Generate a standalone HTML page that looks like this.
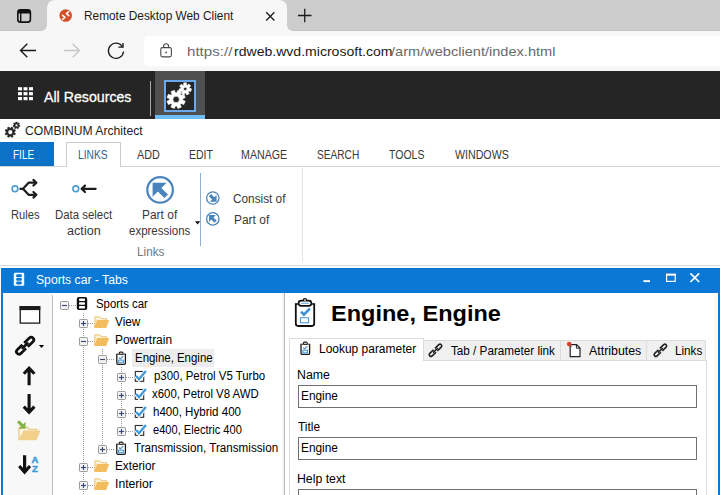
<!DOCTYPE html>
<html>
<head>
<meta charset="utf-8">
<title>Remote Desktop Web Client</title>
<style>
html,body{margin:0;padding:0;}
body{width:720px;height:495px;overflow:hidden;position:relative;background:#fff;font-family:"Liberation Sans",sans-serif;}
.a{position:absolute;}
.t{position:absolute;white-space:nowrap;line-height:1;transform-origin:0 50%;}
svg{position:absolute;left:0;top:0;}

</style>
</head>
<body>
<!-- browser chrome -->
<div class="a" style="left:0;top:0;width:720px;height:31px;background:#cdcdcd;"></div>
<div class="a" style="left:0;top:31px;width:720px;height:40px;background:#f7f7f7;"></div>
<div class="a" style="left:0;top:30.4px;width:720px;height:1px;background:#c3c3c3;"></div>
<div class="a" style="left:47px;top:0;width:240px;height:32px;background:#f7f7f7;border-radius:8px 8px 0 0;"></div>
<div class="a" style="left:41px;top:25px;width:6px;height:6px;background:#f7f7f7;"></div>
<div class="a" style="left:41px;top:25px;width:6px;height:6px;background:#cdcdcd;border-radius:0 0 6px 0;"></div>
<div class="a" style="left:287px;top:25px;width:6px;height:6px;background:#f7f7f7;"></div>
<div class="a" style="left:287px;top:25px;width:6px;height:6px;background:#cdcdcd;border-radius:0 0 0 6px;"></div>
<div class="a" style="left:144px;top:36px;width:600px;height:30px;background:#fff;border-radius:5px;"></div>
<!-- remote desktop app bar -->
<div class="a" style="left:0;top:71px;width:720px;height:48px;background:#252525;"></div>
<div class="a" style="left:155px;top:71px;width:50px;height:44px;background:#505050;"></div>
<div class="a" style="left:155px;top:115px;width:50px;height:4px;background:#6ebdf7;"></div>
<div class="a" style="left:164px;top:80px;width:28px;height:28px;border:2px solid #6aa9ee;background:#252525;"></div>
<div class="a" style="left:150px;top:81px;width:1px;height:35px;background:#a8a8a8;"></div>
<!-- ribbon -->
<div class="a" style="left:0;top:142.4px;width:54px;height:23.6px;background:#0c72c6;"></div>
<div class="a" style="left:0;top:166px;width:720px;height:1px;background:#d2d2d2;"></div>
<div class="a" style="left:66px;top:142px;width:53px;height:24px;border:1px solid #cccccc;border-bottom:none;background:#fff;"></div>
<div class="a" style="left:0;top:265px;width:720px;height:1px;background:#d6d6d6;"></div>
<div class="a" style="left:302px;top:168px;width:1px;height:94px;background:#e4e4e4;"></div>
<div class="a" style="left:200px;top:173px;width:1px;height:73px;background:#8fb0d0;"></div>
<!-- child window -->
<div class="a" style="left:1px;top:268px;width:719px;height:227px;background:#0a78d4;"></div>
<div class="a" style="left:2.6px;top:292.5px;width:715.6px;height:203px;background:#fff;"></div>
<div class="a" style="left:2.6px;top:292.5px;width:49.4px;height:203px;background:#f8f8f8;"></div>
<div class="a" style="left:52px;top:295px;width:1px;height:200px;background:#bdbdbd;"></div>
<div class="a" style="left:282px;top:292.5px;width:2px;height:203px;background:#f6f6f6;"></div>
<div class="a" style="left:284px;top:292.5px;width:1.4px;height:203px;background:#b6b6b6;"></div>
<!-- tree selection -->
<div class="a" style="left:132px;top:349px;width:82px;height:18px;background:#ececec;"></div>
<!-- tab control -->
<div class="a" style="left:423px;top:340px;width:283px;height:20px;background:#f0f0f0;border-top:1px solid #dcdcdc;border-right:1px solid #dcdcdc;box-sizing:border-box;"></div>
<div class="a" style="left:560px;top:341px;width:1px;height:19px;background:#dcdcdc;"></div>
<div class="a" style="left:646px;top:341px;width:1px;height:19px;background:#dcdcdc;"></div>
<div class="a" style="left:289px;top:360px;width:418px;height:140px;background:#fff;border:1px solid #dcdcdc;box-sizing:border-box;"></div>
<div class="a" style="left:289px;top:338px;width:135px;height:23px;background:#fff;border:1px solid #dcdcdc;border-bottom:none;box-sizing:border-box;"></div>
<!-- inputs -->
<div class="a" style="left:298px;top:385px;width:399px;height:23px;background:#fff;border:1px solid #707070;box-sizing:border-box;"></div>
<div class="a" style="left:298px;top:437px;width:399px;height:23px;background:#fff;border:1px solid #707070;box-sizing:border-box;"></div>
<div class="a" style="left:298px;top:489px;width:399px;height:23px;background:#fff;border:1px solid #707070;box-sizing:border-box;"></div>

<svg width="720" height="495" viewBox="0 0 720 495">
<rect x="17.8" y="9.8" width="12.6" height="12.3" rx="2.6" fill="none" stroke="#111" stroke-width="1.6"/>
<path d="M17.8 13.4 L17.8 12.4 Q17.8 9.8 20.4 9.8 L27.8 9.8 Q30.4 9.8 30.4 12.4 L30.4 13.4Z" fill="#111"/>
<path d="M20.7 13 V22" stroke="#111" stroke-width="1.4"/>
<circle cx="65.7" cy="15.5" r="6.3" fill="#d4502c"/>
<path d="M62.6 15.3 L65 17.3 L62.6 19.3 M68.8 11.7 L66.4 13.7 L68.8 15.7" fill="none" stroke="#fff" stroke-width="1.5" stroke-linecap="round" stroke-linejoin="round"/>
<path d="M266.2 12.3 L274.4 20.5 M274.4 12.3 L266.2 20.5" stroke="#1a1a1a" stroke-width="1.3"/>
<path d="M298 15.5 H311.5 M304.75 8.8 V22.2" stroke="#1a1a1a" stroke-width="1.3"/>
<path d="M20.5 50.5 H36 M27.3 43.7 L20.5 50.5 L27.3 57.3" fill="none" stroke="#1a1a1a" stroke-width="1.4"/>
<path d="M64 50.5 H79.5 M72.7 43.7 L79.5 50.5 L72.7 57.3" fill="none" stroke="#c6c6c6" stroke-width="1.4"/>
<path d="M123.57 51.46 A7.6 7.6 0 1 1 122.6 47" fill="none" stroke="#1a1a1a" stroke-width="1.3"/>
<path d="M123 43 V47.1 H118.4" fill="none" stroke="#1a1a1a" stroke-width="1.3"/>
<rect x="160.8" y="47.6" width="10.6" height="9.3" rx="1.6" fill="none" stroke="#4a4a4a" stroke-width="1.1"/>
<path d="M163.6 47.6 V46.2 A2.5 2.5 0 0 1 168.6 46.2 V47.6" fill="none" stroke="#4a4a4a" stroke-width="1.1"/>
<circle cx="166.1" cy="52.4" r="0.9" fill="#4a4a4a"/>
<rect x="18.00" y="87.20" width="4" height="3.2" fill="#fff"/>
<rect x="23.50" y="87.20" width="4" height="3.2" fill="#fff"/>
<rect x="29.00" y="87.20" width="4" height="3.2" fill="#fff"/>
<rect x="18.00" y="92.10" width="4" height="3.2" fill="#fff"/>
<rect x="23.50" y="92.10" width="4" height="3.2" fill="#fff"/>
<rect x="29.00" y="92.10" width="4" height="3.2" fill="#fff"/>
<rect x="18.00" y="97.00" width="4" height="3.2" fill="#fff"/>
<rect x="23.50" y="97.00" width="4" height="3.2" fill="#fff"/>
<rect x="29.00" y="97.00" width="4" height="3.2" fill="#fff"/>
<path d="M182.67 100.07 L185.22 101.21 L183.83 104.57 L181.22 103.57 L180.27 104.52 L181.27 107.13 L177.91 108.52 L176.77 105.97 L175.43 105.97 L174.29 108.52 L170.93 107.13 L171.93 104.52 L170.98 103.57 L168.37 104.57 L166.98 101.21 L169.53 100.07 L169.53 98.73 L166.98 97.59 L168.37 94.23 L170.98 95.23 L171.93 94.28 L170.93 91.67 L174.29 90.28 L175.43 92.83 L176.77 92.83 L177.91 90.28 L181.27 91.67 L180.27 94.28 L181.22 95.23 L183.83 94.23 L185.22 97.59 L182.67 98.73Z M172.90 99.40 a3.20 3.20 0 1 0 6.40 0 a3.20 3.20 0 1 0 -6.40 0Z" fill="#fff" fill-rule="evenodd" stroke="#fff" stroke-width="0.6" stroke-linejoin="round"/>
<path d="M189.36 88.35 L191.40 88.75 L190.85 91.45 L188.82 91.03 L188.23 91.81 L189.18 93.65 L186.73 94.91 L185.79 93.06 L184.81 93.08 L183.97 94.98 L181.45 93.84 L182.32 91.95 L181.69 91.20 L179.68 91.73 L179.00 89.05 L181.01 88.55 L181.21 87.59 L179.55 86.35 L181.22 84.15 L182.86 85.41 L183.73 84.96 L183.67 82.89 L186.43 82.82 L186.47 84.90 L187.36 85.30 L188.95 83.96 L190.72 86.07 L189.12 87.40Z M183.50 88.90 a1.70 1.70 0 1 0 3.40 0 a1.70 1.70 0 1 0 -3.40 0Z" fill="#fff" fill-rule="evenodd" stroke="#fff" stroke-width="0.6" stroke-linejoin="round"/>
<path d="M14.17 132.72 L15.46 133.40 L14.80 135.00 L13.40 134.57 L12.67 135.30 L13.10 136.70 L11.50 137.36 L10.82 136.07 L9.78 136.07 L9.10 137.36 L7.50 136.70 L7.93 135.30 L7.20 134.57 L5.80 135.00 L5.14 133.40 L6.43 132.72 L6.43 131.68 L5.14 131.00 L5.80 129.40 L7.20 129.83 L7.93 129.10 L7.50 127.70 L9.10 127.04 L9.78 128.33 L10.82 128.33 L11.50 127.04 L13.10 127.70 L12.67 129.10 L13.40 129.83 L14.80 129.40 L15.46 131.00 L14.17 131.68Z M7.90 132.20 a2.40 2.40 0 1 0 4.80 0 a2.40 2.40 0 1 0 -4.80 0Z" fill="#222" fill-rule="evenodd" stroke="#222" stroke-width="0.6" stroke-linejoin="round"/>
<path d="M18.89 125.17 L19.90 125.44 L19.65 126.69 L18.61 126.54 L18.17 127.12 L18.59 128.08 L17.45 128.66 L16.92 127.76 L16.19 127.78 L15.71 128.71 L14.54 128.18 L14.92 127.20 L14.45 126.64 L13.42 126.84 L13.11 125.60 L14.10 125.29 L14.25 124.57 L13.45 123.89 L14.22 122.87 L15.09 123.45 L15.74 123.12 L15.78 122.08 L17.06 122.05 L17.14 123.09 L17.81 123.39 L18.65 122.77 L19.47 123.74 L18.71 124.46Z M15.20 125.40 a1.30 1.30 0 1 0 2.60 0 a1.30 1.30 0 1 0 -2.60 0Z" fill="#222" fill-rule="evenodd" stroke="#222" stroke-width="0.6" stroke-linejoin="round"/><!-- Rules icon -->
<circle cx="15" cy="188.8" r="2.9" fill="#fff" stroke="#4a9bd0" stroke-width="1.6"/>
<path d="M19.6 188.8 H23 L28.6 182.7 H35.6 M23 188.8 L28.6 194.8 H35.6" fill="none" stroke="#1c1c1c" stroke-width="2.2" stroke-linejoin="round"/>
<path d="M33.4 179.9 L36.4 182.7 L33.4 185.5 M33.4 192 L36.4 194.8 L33.4 197.6" fill="none" stroke="#1c1c1c" stroke-width="2.2" stroke-linejoin="round" stroke-linecap="round"/>
<!-- Data select action icon -->
<circle cx="75.8" cy="188.8" r="2.9" fill="#fff" stroke="#4a9bd0" stroke-width="1.6"/>
<path d="M82 188.8 H95.6 M85 185.6 L81.6 188.8 L85 192" fill="none" stroke="#1c1c1c" stroke-width="2.2" stroke-linejoin="round" stroke-linecap="round"/>
<!-- Part of expressions (big) -->
<circle cx="160.1" cy="189.9" r="12.8" fill="#fff" stroke="#4a84bd" stroke-width="2.2"/>
<path d="M152.6 182.7 H166.6 L161.4 187.9 L168 194.5 L164.4 198.1 L157.8 191.5 L152.6 196.7Z" fill="#4a84bd"/>
<path d="M195 221.2 H200.2 L197.6 224.4Z" fill="#111"/>
<!-- small: consist of (SE arrow) -->
<circle cx="212.8" cy="198" r="6.2" fill="#fff" stroke="#4a84bd" stroke-width="1.3"/>
<path d="M216.6 201.8 H209.8 L212.1 199.5 L208.9 196.3 L211.1 194.1 L214.3 197.3 L216.6 195Z" fill="#4a84bd"/>
<!-- small: part of (NW arrow) -->
<circle cx="212.8" cy="218.9" r="6.2" fill="#fff" stroke="#4a84bd" stroke-width="1.3"/>
<path d="M209 215.1 H215.8 L213.5 217.4 L216.7 220.6 L214.5 222.8 L211.3 219.6 L209 221.9Z" fill="#4a84bd"/>
<!-- window title icon (white stack) -->
<rect x="13.8" y="272.8" width="10.4" height="13" rx="1.2" fill="#fff"/>
<rect x="16.1" y="274.3" width="5.8" height="2.9" rx="1.3" fill="#0a78d4"/>
<rect x="16.1" y="277.9" width="5.8" height="2.9" rx="1.3" fill="#0a78d4"/>
<rect x="16.1" y="281.5" width="5.8" height="2.9" rx="1.3" fill="#0a78d4"/>
<!-- window controls -->
<rect x="643.4" y="280.2" width="6.6" height="1.9" fill="#fff"/>
<rect x="666.6" y="274.6" width="8.6" height="6.8" fill="none" stroke="#fff" stroke-width="1.2"/>
<rect x="666" y="273.6" width="9.8" height="2" fill="#fff"/>
<path d="M690.4 273.4 L699.2 282 M699.2 273.4 L690.4 282" stroke="#fff" stroke-width="1.7"/>
<!-- left toolbar: window -->
<rect x="20.25" y="306.8" width="19.4" height="16.3" fill="#fff" stroke="#1a1a1a" stroke-width="1.3"/>
<rect x="19.6" y="306.1" width="20.7" height="4" fill="#1a1a1a"/>
<!-- link with dropdown -->
<g transform="translate(25.1 345.7) rotate(-44)" fill="none" stroke="#111" stroke-width="2.7" stroke-linecap="butt">
<path d="M-1.2 2.6 H-8.4 A2.6 2.6 0 0 1 -8.4 -2.6 H-1.2"/>
<path d="M1.2 -2.6 H8.4 A2.6 2.6 0 0 1 8.4 2.6 H1.2"/>
<path d="M-3.4 0 H3.4" stroke-linecap="round"/>
</g>
<path d="M38.9 344.9 H44.1 L41.5 348Z" fill="#000"/>
<!-- up / down arrows -->
<path d="M29.1 385.2 V368.4 M23.8 373.8 L29.1 368.2 L34.4 373.8" fill="none" stroke="#111" stroke-width="3.1"/>
<path d="M29.1 393.9 V412 M23.8 406.6 L29.1 412.2 L34.4 406.6" fill="none" stroke="#111" stroke-width="3.1"/>
<!-- folder with green arrow -->
<path d="M19 440 V427.3 H27.4 L29 429.2 H36.6 V431.6" fill="#fcf5e3" stroke="#e9c274" stroke-width="1.1"/>
<path d="M18.6 440.3 L23.4 430.4 H40.6 L36.4 440.3Z" fill="#f1d08c"/>
<path d="M17 422.4 L19.2 420.2 L23.2 424.2 L25.6 421.8 V428.8 H18.6 L21 426.4Z" fill="#86b24a"/>
<!-- sort AZ -->
<path d="M24.6 455.2 V471.8 M19.2 466 L24.6 472 L30 466" fill="none" stroke="#111" stroke-width="3.2"/>
<text x="31.6" y="462.7" font-family="Liberation Sans, sans-serif" font-weight="700" font-size="9.6" fill="#3a9ad9" stroke="#3a9ad9" stroke-width="0.4">A</text>
<text x="32.1" y="471.6" font-family="Liberation Sans, sans-serif" font-weight="700" font-size="9.6" fill="#3a9ad9" stroke="#3a9ad9" stroke-width="0.4">Z</text>
<path d="M83.5 313.0 V495.0" stroke="#9a9a9a" stroke-width="1" stroke-dasharray="1 1" fill="none"/>
<path d="M102.5 349.0 V449.5" stroke="#9a9a9a" stroke-width="1" stroke-dasharray="1 1" fill="none"/>
<path d="M121.5 367.0 V431.5" stroke="#9a9a9a" stroke-width="1" stroke-dasharray="1 1" fill="none"/>
<path d="M69.0 305.5 H77.0" stroke="#9a9a9a" stroke-width="1" stroke-dasharray="1 1" fill="none"/>
<rect x="60.5" y="301.5" width="8" height="8" rx="0.8" fill="#f4f4f4" stroke="#9a9a9a" stroke-width="1"/>
<path d="M62.0 305.5 H67.0" stroke="#3b4778" stroke-width="1.15"/>
<rect x="76.8" y="296.9" width="10.4" height="13.2" rx="2" fill="#111"/>
<rect x="79.0" y="298.4" width="6" height="2.6" rx="0.7" fill="#fff"/>
<rect x="79.0" y="302.2" width="6" height="2.6" rx="0.7" fill="#fff"/>
<rect x="79.0" y="306.0" width="6" height="2.6" rx="0.7" fill="#fff"/>
<path d="M88.0 323.5 H94.0" stroke="#9a9a9a" stroke-width="1" stroke-dasharray="1 1" fill="none"/>
<rect x="79.5" y="319.5" width="8" height="8" rx="0.8" fill="#f4f4f4" stroke="#9a9a9a" stroke-width="1"/>
<path d="M81.0 323.5 H86.0" stroke="#3b4778" stroke-width="1.15"/>
<path d="M83.5 321.0 V326.0" stroke="#3b4778" stroke-width="1.15"/>
<path d="M94.8 327.4 V316.9 H99.8 L101.4 318.7 H106.6 V320.4" fill="#fdf3d9" stroke="#ecc170" stroke-width="1"/>
<path d="M94.1 327.9 L97.0 319.9 H109.2 L106.2 327.9 Z" fill="#f3bc5e"/>
<path d="M88.0 341.5 H94.0" stroke="#9a9a9a" stroke-width="1" stroke-dasharray="1 1" fill="none"/>
<rect x="79.5" y="337.5" width="8" height="8" rx="0.8" fill="#f4f4f4" stroke="#9a9a9a" stroke-width="1"/>
<path d="M81.0 341.5 H86.0" stroke="#3b4778" stroke-width="1.15"/>
<path d="M94.8 345.4 V334.9 H99.8 L101.4 336.7 H106.6 V338.4" fill="#fdf3d9" stroke="#ecc170" stroke-width="1"/>
<path d="M94.1 345.9 L97.0 337.9 H109.2 L106.2 345.9 Z" fill="#f3bc5e"/>
<path d="M88.0 467.5 H94.0" stroke="#9a9a9a" stroke-width="1" stroke-dasharray="1 1" fill="none"/>
<rect x="79.5" y="463.5" width="8" height="8" rx="0.8" fill="#f4f4f4" stroke="#9a9a9a" stroke-width="1"/>
<path d="M81.0 467.5 H86.0" stroke="#3b4778" stroke-width="1.15"/>
<path d="M83.5 465.0 V470.0" stroke="#3b4778" stroke-width="1.15"/>
<path d="M94.8 471.4 V460.9 H99.8 L101.4 462.7 H106.6 V464.4" fill="#fdf3d9" stroke="#ecc170" stroke-width="1"/>
<path d="M94.1 471.9 L97.0 463.9 H109.2 L106.2 471.9 Z" fill="#f3bc5e"/>
<path d="M88.0 485.5 H94.0" stroke="#9a9a9a" stroke-width="1" stroke-dasharray="1 1" fill="none"/>
<rect x="79.5" y="481.5" width="8" height="8" rx="0.8" fill="#f4f4f4" stroke="#9a9a9a" stroke-width="1"/>
<path d="M81.0 485.5 H86.0" stroke="#3b4778" stroke-width="1.15"/>
<path d="M83.5 483.0 V488.0" stroke="#3b4778" stroke-width="1.15"/>
<path d="M94.8 489.4 V478.9 H99.8 L101.4 480.7 H106.6 V482.4" fill="#fdf3d9" stroke="#ecc170" stroke-width="1"/>
<path d="M94.1 489.9 L97.0 481.9 H109.2 L106.2 489.9 Z" fill="#f3bc5e"/>
<path d="M107.0 359.5 H115.0" stroke="#9a9a9a" stroke-width="1" stroke-dasharray="1 1" fill="none"/>
<rect x="98.5" y="355.5" width="8" height="8" rx="0.8" fill="#f4f4f4" stroke="#9a9a9a" stroke-width="1"/>
<path d="M100.0 359.5 H105.0" stroke="#3b4778" stroke-width="1.15"/>
<g transform="translate(115.8 351.1) scale(1.000)"><path d="M1 3 V12 Q1 13.2 2.2 13.2 H8.4 Q9.6 13.2 9.6 12 V3" fill="#fff" stroke="#1a1a1a" stroke-width="1.3"/><path d="M0.4 3 H10.2" stroke="#1a1a1a" stroke-width="0.9"/><rect x="2.9" y="0.4" width="4.8" height="3.2" rx="1.5" fill="#1a1a1a"/><rect x="3.8" y="1.6" width="3" height="1" rx="0.5" fill="#fff"/><path d="M3.2 6.4 L4.6 7.8 L7.4 4.9" fill="none" stroke="#5d8fb8" stroke-width="1.1"/><rect x="2.8" y="9" width="4.8" height="2.6" fill="#e4f1fb" stroke="#2f8fd8" stroke-width="0.9"/></g>
<path d="M107.0 449.5 H115.0" stroke="#9a9a9a" stroke-width="1" stroke-dasharray="1 1" fill="none"/>
<rect x="98.5" y="445.5" width="8" height="8" rx="0.8" fill="#f4f4f4" stroke="#9a9a9a" stroke-width="1"/>
<path d="M100.0 449.5 H105.0" stroke="#3b4778" stroke-width="1.15"/>
<path d="M102.5 447.0 V452.0" stroke="#3b4778" stroke-width="1.15"/>
<g transform="translate(115.8 441.1) scale(1.000)"><path d="M1 3 V12 Q1 13.2 2.2 13.2 H8.4 Q9.6 13.2 9.6 12 V3" fill="#fff" stroke="#1a1a1a" stroke-width="1.3"/><path d="M0.4 3 H10.2" stroke="#1a1a1a" stroke-width="0.9"/><rect x="2.9" y="0.4" width="4.8" height="3.2" rx="1.5" fill="#1a1a1a"/><rect x="3.8" y="1.6" width="3" height="1" rx="0.5" fill="#fff"/><path d="M3.2 6.4 L4.6 7.8 L7.4 4.9" fill="none" stroke="#5d8fb8" stroke-width="1.1"/><rect x="2.8" y="9" width="4.8" height="2.6" fill="#e4f1fb" stroke="#2f8fd8" stroke-width="0.9"/></g>
<path d="M126.0 377.5 H133.0" stroke="#9a9a9a" stroke-width="1" stroke-dasharray="1 1" fill="none"/>
<rect x="117.5" y="373.5" width="8" height="8" rx="0.8" fill="#f4f4f4" stroke="#9a9a9a" stroke-width="1"/>
<path d="M119.0 377.5 H124.0" stroke="#3b4778" stroke-width="1.15"/>
<path d="M121.5 375.0 V380.0" stroke="#3b4778" stroke-width="1.15"/>
<rect x="135.3" y="371.5" width="8.4" height="9.8" fill="#fff" stroke="#2a2a2a" stroke-width="1.1"/>
<path d="M136.1 376.0 l2.9 3.3 l6.9 -8.3" fill="none" stroke="#fff" stroke-width="4.2"/>
<path d="M136.1 376.0 l2.9 3.3 l6.9 -8.3" fill="none" stroke="#3f9bd8" stroke-width="2.3"/>
<path d="M126.0 395.5 H133.0" stroke="#9a9a9a" stroke-width="1" stroke-dasharray="1 1" fill="none"/>
<rect x="117.5" y="391.5" width="8" height="8" rx="0.8" fill="#f4f4f4" stroke="#9a9a9a" stroke-width="1"/>
<path d="M119.0 395.5 H124.0" stroke="#3b4778" stroke-width="1.15"/>
<path d="M121.5 393.0 V398.0" stroke="#3b4778" stroke-width="1.15"/>
<rect x="135.3" y="389.5" width="8.4" height="9.8" fill="#fff" stroke="#2a2a2a" stroke-width="1.1"/>
<path d="M136.1 394.0 l2.9 3.3 l6.9 -8.3" fill="none" stroke="#fff" stroke-width="4.2"/>
<path d="M136.1 394.0 l2.9 3.3 l6.9 -8.3" fill="none" stroke="#3f9bd8" stroke-width="2.3"/>
<path d="M126.0 413.5 H133.0" stroke="#9a9a9a" stroke-width="1" stroke-dasharray="1 1" fill="none"/>
<rect x="117.5" y="409.5" width="8" height="8" rx="0.8" fill="#f4f4f4" stroke="#9a9a9a" stroke-width="1"/>
<path d="M119.0 413.5 H124.0" stroke="#3b4778" stroke-width="1.15"/>
<path d="M121.5 411.0 V416.0" stroke="#3b4778" stroke-width="1.15"/>
<rect x="135.3" y="407.5" width="8.4" height="9.8" fill="#fff" stroke="#2a2a2a" stroke-width="1.1"/>
<path d="M136.1 412.0 l2.9 3.3 l6.9 -8.3" fill="none" stroke="#fff" stroke-width="4.2"/>
<path d="M136.1 412.0 l2.9 3.3 l6.9 -8.3" fill="none" stroke="#3f9bd8" stroke-width="2.3"/>
<path d="M126.0 431.5 H133.0" stroke="#9a9a9a" stroke-width="1" stroke-dasharray="1 1" fill="none"/>
<rect x="117.5" y="427.5" width="8" height="8" rx="0.8" fill="#f4f4f4" stroke="#9a9a9a" stroke-width="1"/>
<path d="M119.0 431.5 H124.0" stroke="#3b4778" stroke-width="1.15"/>
<path d="M121.5 429.0 V434.0" stroke="#3b4778" stroke-width="1.15"/>
<rect x="135.3" y="425.5" width="8.4" height="9.8" fill="#fff" stroke="#2a2a2a" stroke-width="1.1"/>
<path d="M136.1 430.0 l2.9 3.3 l6.9 -8.3" fill="none" stroke="#fff" stroke-width="4.2"/>
<path d="M136.1 430.0 l2.9 3.3 l6.9 -8.3" fill="none" stroke="#3f9bd8" stroke-width="2.3"/>
<g transform="translate(294.1 298.0)"><path d="M1.7 5.8 V25.6 Q1.7 28 4.1 28 H17.7 Q20.1 28 20.1 25.6 V5.8" fill="#fff" stroke="#111" stroke-width="1.8"/><path d="M0.8 5.9 H5 M16.8 5.9 H21" stroke="#111" stroke-width="1.5"/><circle cx="10.9" cy="2.4" r="2.3" fill="#111"/><rect x="4.5" y="2.6" width="12.8" height="5.2" rx="2.6" fill="#fff" stroke="#111" stroke-width="1.7"/><circle cx="10.9" cy="2.1" r="0.9" fill="#fff"/><path d="M7 5.3 H14.8" stroke="#5aa7e0" stroke-width="1"/><path d="M6.9 13.7 L9.8 16.6 L15.8 10.5" fill="none" stroke="#3c92d5" stroke-width="2.5"/><rect x="6.3" y="19.8" width="8.2" height="5" fill="#fff" stroke="#3c92d5" stroke-width="1"/></g>
<g transform="translate(300.0 341.2) scale(1.000)"><path d="M1 3 V12 Q1 13.2 2.2 13.2 H8.4 Q9.6 13.2 9.6 12 V3" fill="#fff" stroke="#1a1a1a" stroke-width="1.3"/><path d="M0.4 3 H10.2" stroke="#1a1a1a" stroke-width="0.9"/><rect x="2.9" y="0.4" width="4.8" height="3.2" rx="1.5" fill="#1a1a1a"/><rect x="3.8" y="1.6" width="3" height="1" rx="0.5" fill="#fff"/><path d="M3.2 6.4 L4.6 7.8 L7.4 4.9" fill="none" stroke="#5d8fb8" stroke-width="1.1"/><rect x="2.8" y="9" width="4.8" height="2.6" fill="#e4f1fb" stroke="#2f8fd8" stroke-width="0.9"/></g>
<g transform="translate(435.5 350.3) rotate(-44) scale(1.08)" fill="none" stroke="#222" stroke-width="1.5"><path d="M-0.9 1.6 H-5.8 A1.6 1.6 0 0 1 -5.8 -1.6 H-0.9"/><path d="M0.9 -1.6 H5.8 A1.6 1.6 0 0 1 5.8 1.6 H0.9"/><path d="M-2.4 0 H2.4" stroke-linecap="round"/></g>
<g transform="translate(660.4 350.3) rotate(-44) scale(1.08)" fill="none" stroke="#222" stroke-width="1.5"><path d="M-0.9 1.6 H-5.8 A1.6 1.6 0 0 1 -5.8 -1.6 H-0.9"/><path d="M0.9 -1.6 H5.8 A1.6 1.6 0 0 1 5.8 1.6 H0.9"/><path d="M-2.4 0 H2.4" stroke-linecap="round"/></g>
<path d="M570.2 344.6 H576.6 L580 348 V356.6 H570.2Z" fill="#fff" stroke="#222" stroke-width="1.2"/>
<path d="M576.4 344.8 V348.2 H579.8" fill="none" stroke="#222" stroke-width="1"/>
<circle cx="569.2" cy="344.1" r="2.3" fill="#d9412c"/>
<path d="M569.6 344.8 L571.6 347" stroke="#8a2a1c" stroke-width="1"/></svg>

<div class="t" style="left:83.80px;top:9.5px;font-size:12.4px;color:#1a1a1a;transform:scaleX(0.9564);">Remote Desktop Web Client</div>
<div class="t" style="left:187.34px;top:45.2px;font-size:13px;color:#6a6a6a;transform:scaleX(1.1616);">https://</div>
<div class="t" style="left:233.57px;top:45.2px;font-size:13px;color:#1a1a1a;transform:scaleX(1.0808);">rdweb.wvd.microsoft.com</div>
<div class="t" style="left:390.76px;top:45.2px;font-size:13px;color:#6a6a6a;transform:scaleX(1.1210);">/arm/webclient/index.html</div>
<div class="t" style="left:43.65px;top:88.9px;font-size:15px;color:#fff;transform:scaleX(0.9452);-webkit-text-stroke:0.3px #fff;">All Resources</div>
<div class="t" style="left:24.69px;top:124.7px;font-size:12.3px;color:#222;transform:scaleX(0.9896);">COMBINUM Architect</div>
<div class="t" style="left:12.67px;top:149.0px;font-size:12.5px;color:#fff;transform:scaleX(0.7994);">FILE</div>
<div class="t" style="left:78.06px;top:149.0px;font-size:12.5px;color:#2a6099;transform:scaleX(0.8192);">LINKS</div>
<div class="t" style="left:136.79px;top:149.0px;font-size:12.5px;color:#383838;transform:scaleX(0.8678);">ADD</div>
<div class="t" style="left:189.01px;top:149.0px;font-size:12.5px;color:#383838;transform:scaleX(0.8403);">EDIT</div>
<div class="t" style="left:241.00px;top:149.0px;font-size:12.5px;color:#383838;transform:scaleX(0.8529);">MANAGE</div>
<div class="t" style="left:317.34px;top:149.0px;font-size:12.5px;color:#383838;transform:scaleX(0.8110);">SEARCH</div>
<div class="t" style="left:389.08px;top:149.0px;font-size:12.5px;color:#383838;transform:scaleX(0.8394);">TOOLS</div>
<div class="t" style="left:455.27px;top:149.0px;font-size:12.5px;color:#383838;transform:scaleX(0.8511);">WINDOWS</div>
<div class="t" style="left:10.94px;top:209.0px;font-size:12.5px;color:#383838;transform:scaleX(0.8919);">Rules</div>
<div class="t" style="left:54.55px;top:209.0px;font-size:12.5px;color:#383838;transform:scaleX(0.9130);">Data select</div>
<div class="t" style="left:66.78px;top:224.8px;font-size:12.5px;color:#383838;transform:scaleX(1.0122);">action</div>
<div class="t" style="left:142.16px;top:209.0px;font-size:12.5px;color:#383838;transform:scaleX(0.9565);">Part of</div>
<div class="t" style="left:129.18px;top:224.9px;font-size:12.5px;color:#383838;transform:scaleX(0.9190);">expressions</div>
<div class="t" style="left:137.01px;top:245.8px;font-size:12.5px;color:#777;transform:scaleX(0.9413);">Links</div>
<div class="t" style="left:233.16px;top:193.0px;font-size:12.5px;color:#383838;transform:scaleX(0.9434);">Consist of</div>
<div class="t" style="left:233.58px;top:213.9px;font-size:12.5px;color:#383838;transform:scaleX(0.9565);">Part of</div>
<div class="t" style="left:35.50px;top:274.3px;font-size:12.5px;color:#fff;transform:scaleX(0.9738);">Sports car - Tabs</div>
<div class="t" style="left:95.92px;top:297.5px;font-size:12px;color:#000;transform:scaleX(0.9480);">Sports car</div>
<div class="t" style="left:115.21px;top:315.5px;font-size:12px;color:#000;transform:scaleX(0.9803);">View</div>
<div class="t" style="left:114.60px;top:333.5px;font-size:12px;color:#000;transform:scaleX(0.9945);">Powertrain</div>
<div class="t" style="left:134.77px;top:351.5px;font-size:12px;color:#000;transform:scaleX(0.9535);">Engine, Engine</div>
<div class="t" style="left:153.80px;top:369.5px;font-size:12px;color:#000;transform:scaleX(0.9517);">p300, Petrol V5 Turbo</div>
<div class="t" style="left:152.31px;top:387.5px;font-size:12px;color:#000;transform:scaleX(0.9516);">x600, Petrol V8 AWD</div>
<div class="t" style="left:153.40px;top:405.5px;font-size:12px;color:#000;transform:scaleX(0.9628);">h400, Hybrid 400</div>
<div class="t" style="left:153.40px;top:423.5px;font-size:12px;color:#000;transform:scaleX(0.9247);">e400, Electric 400</div>
<div class="t" style="left:134.02px;top:441.5px;font-size:12px;color:#000;transform:scaleX(0.9722);">Transmission, Transmission</div>
<div class="t" style="left:114.84px;top:459.5px;font-size:12px;color:#000;transform:scaleX(0.9761);">Exterior</div>
<div class="t" style="left:114.63px;top:477.5px;font-size:12px;color:#000;transform:scaleX(1.0132);">Interior</div>
<div class="t" style="left:330.75px;top:302.2px;font-size:22.8px;color:#000;font-weight:700;transform:scaleX(1.0317);">Engine, Engine</div>
<div class="t" style="left:319.19px;top:343.1px;font-size:12px;color:#000;transform:scaleX(0.9971);">Lookup parameter</div>
<div class="t" style="left:450.82px;top:344.6px;font-size:12px;color:#000;transform:scaleX(0.9743);">Tab / Parameter link</div>
<div class="t" style="left:589.22px;top:344.6px;font-size:12px;color:#000;transform:scaleX(1.0313);">Attributes</div>
<div class="t" style="left:675.33px;top:344.6px;font-size:12px;color:#000;transform:scaleX(0.9715);">Links</div>
<div class="t" style="left:296.64px;top:369.1px;font-size:12px;color:#000;transform:scaleX(1.0261);">Name</div>
<div class="t" style="left:300.81px;top:389.8px;font-size:12px;color:#000;transform:scaleX(0.9888);">Engine</div>
<div class="t" style="left:297.80px;top:420.8px;font-size:12px;color:#000;transform:scaleX(0.9890);">Title</div>
<div class="t" style="left:300.81px;top:441.5px;font-size:12px;color:#000;transform:scaleX(0.9888);">Engine</div>
<div class="t" style="left:296.70px;top:473.1px;font-size:12px;color:#000;transform:scaleX(1.0231);">Help text</div>
</body>
</html>
